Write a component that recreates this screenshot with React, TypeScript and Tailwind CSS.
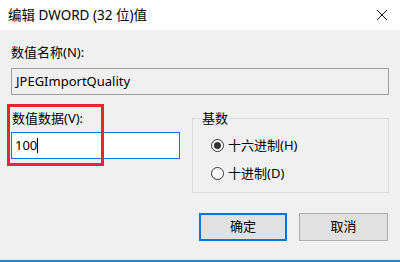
import React from 'react';

const font = { fontFamily: '"Noto Sans", "Noto Sans CJK SC", sans-serif' };

function Radio({ checked, label }: { checked: boolean; label: string }) {
	return (
		<div className="flex items-center h-[18px]">
			<span className="w-[13px] h-[13px] rounded-full border border-[#333333] bg-white flex items-center justify-center">
				{checked && <span className="w-[7px] h-[7px] rounded-full bg-[#333333]" />}
			</span>
			<span className="ml-[4px] text-[13px] leading-[18px]">{label}</span>
		</div>
	);
}

export default function App() {
	return (
		<div className="w-[400px] h-[262px] flex flex-col bg-[#f0f0f0] text-black" style={font}>
			{/* title bar */}
			<div className="h-[30px] bg-white flex items-center justify-between pl-[8px] pr-[12px]">
				<span className="text-[13.5px] leading-[18px]">编辑 DWORD (32 位)值</span>
				<svg width="12" height="12" viewBox="0 0 12 12">
					<path d="M1 1L11 11M11 1L1 11" stroke="#111" strokeWidth="1" />
				</svg>
			</div>

			<div className="flex-1 px-[11px] pt-[13px]">
				<div className="text-[13px] leading-[18px]">数值名称(N):</div>
				<div className="mt-[7px] h-[27px] border border-[#a0a0a0] bg-[#f0f0f0] flex items-center px-[4px] text-[13px]">
					JPEGImportQuality
				</div>

				<div className="mt-[14px] flex gap-[12px]">
					<div className="relative w-[169px]">
						<div className="text-[13px] leading-[18px] pl-[1px]">数值数据(V):</div>
						<div className="mt-[5px] h-[27px] border border-[#0078d7] bg-white flex items-center px-[3px] text-[13px]">
							100
							<span className="w-px h-[15px] bg-black" />
						</div>
						{/* highlight annotation */}
						<div className="absolute left-[-4px] top-[-5px] w-[97px] h-[62px] border-[3px] border-[#e8262b]" />
					</div>

					<fieldset className="flex-1 h-[84px] border border-[#dcdcdc] pl-[18px] pr-[8px] m-0">
						<legend className="text-[13px] leading-[18px] -ml-[10px] px-[1px]">基数</legend>
						<div className="mt-[9px] flex flex-col gap-[10px]">
							<Radio checked label="十六进制(H)" />
							<Radio checked={false} label="十进制(D)" />
						</div>
					</fieldset>
				</div>

				<div className="mt-[20px] flex justify-end gap-[12px] pr-[1px]">
					<button className="w-[88px] h-[28px] bg-[#e1e1e1] border-2 border-[#0078d7] text-[13px]">确定</button>
					<button className="w-[89px] h-[28px] bg-[#e1e1e1] border border-[#adadad] text-[13px]">取消</button>
				</div>
			</div>

			<div className="h-[1px] bg-[#d6ecf5]" />
			<div className="h-[2px] bg-[#2f86c6]" />
		</div>
	);
}
